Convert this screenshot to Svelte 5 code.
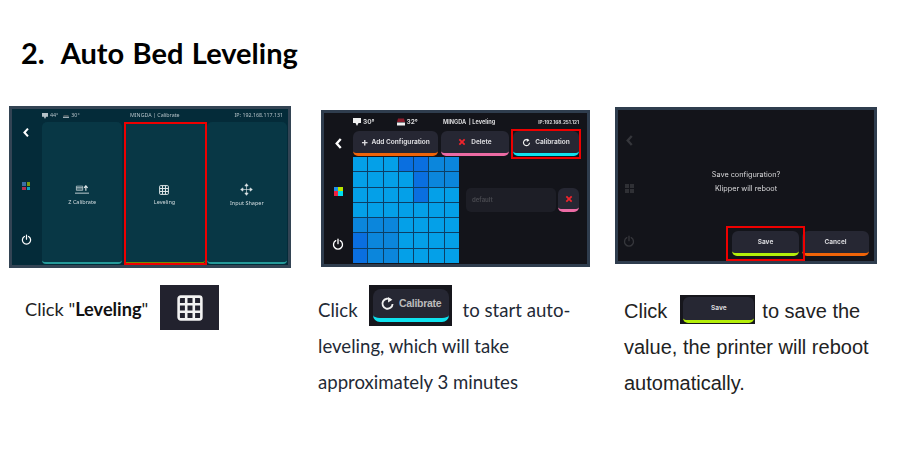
<script>
  const L = '#04a0e8', D = '#0a6fe0', M = '#0b86dc';
  const cells = [
    L,L,L,D,D,M,M,
    L,L,L,L,D,M,M,
    L,L,L,L,D,L,L,
    L,L,L,L,L,L,L,
    M,M,M,L,L,L,L,
    D,M,M,L,L,L,L,
    D,M,M,L,L,L,L
  ];
</script>

<svg width="0" height="0" class="defs" aria-hidden="true">
  <defs>
    <symbol id="back" viewBox="0 0 10 14"><path d="M7.500 2 3 7l4.500 5" fill="none" stroke="currentColor" stroke-width="2.600"/></symbol>
    <symbol id="power" viewBox="0 0 16 16"><path d="M5 3.600a6 6 0 1 0 6 0M8 1.500v6" fill="none" stroke="currentColor" stroke-width="1.800" stroke-linecap="round"/></symbol>
    <symbol id="grid" viewBox="0 0 24 24"><rect x="1.500" y="1.500" width="21" height="21" rx="2" fill="none" stroke="currentColor" stroke-width="2.400"/><path d="M8.500 2v20M15.500 2v20M2 8.500h20M2 15.500h20" stroke="currentColor" stroke-width="2.400"/></symbol>
    <symbol id="refresh" viewBox="0 0 16 16"><path d="M11.600 4.200a5.400 5.400 0 1 0 1.800 4.300" fill="none" stroke="currentColor" stroke-width="2"/><path d="M8.600 1v6l4.600-3z" fill="currentColor"/></symbol>
    <symbol id="cross" viewBox="0 0 12 12"><path d="M2 2l8 8M10 2l-8 8" stroke="currentColor" stroke-width="2.600"/></symbol>
    <symbol id="move" viewBox="0 0 20 20"><path d="M10 2v16M2 10h16M10 1 7.500 4.500h5zM10 19l-2.500-3.500h5zM1 10l3.500-2.500v5zM19 10l-3.500-2.500v5z" fill="currentColor" stroke="currentColor" stroke-width="1"/></symbol>
    <symbol id="z" viewBox="0 0 20 14"><path d="M2 1.500h9v6H2zM2 3.500h9M2 5.500h9" fill="none" stroke="currentColor" stroke-width=".9"/><path d="M15.500 8V2M13 4l2.500-3L18 4" fill="none" stroke="currentColor" stroke-width="1.600"/><path d="M0 11.500h20" stroke="currentColor" stroke-width="1.200"/></symbol>
    <symbol id="nozzle" viewBox="0 0 8 8"><path d="M0 0h8v5H5.500L4 8 2.500 5H0z" fill="currentColor"/></symbol>
    <symbol id="bed" viewBox="0 0 8 7"><path d="M1 0h6l1 3.500H0z" fill="#8c1c2c"/><path d="M0 4h8v3H0z" fill="currentColor"/></symbol>
    <symbol id="bedteal" viewBox="0 0 8 7"><path d="M1 2h6l1 2H0z" fill="#4a5a60"/><path d="M0 4.500h8V6H0z" fill="currentColor"/></symbol>
  </defs>
</svg>

<main class="page">
  <h1>2.&nbsp; Auto Bed Leveling</h1>
  <div class="steps">
    <section class="step one">
      <div class="screen teal">
        <aside class="side">
          <svg class="ico-back"><use href="#back" /></svg>
          <span class="dots tealdots"><i></i><i></i><i></i><i></i></span>
          <svg class="ico-power"><use href="#power" /></svg>
        </aside>
        <div class="body">
          <header class="status">
            <span class="temps"><svg><use href="#nozzle" /></svg>44°<svg class="gap"><use href="#bedteal" /></svg>30°</span>
            <span>MINGDA | Calibrate</span>
            <span class="ip1">IP: 192.168.117.131</span>
          </header>
          <div class="cards">
            <div class="card">
              <svg class="ci"><use href="#z" /></svg><span>Z Calibrate</span>
            </div>
            <div class="card active">
              <svg class="ci"><use href="#grid" /></svg><span>Leveling</span>
            </div>
            <div class="card">
              <svg class="ci big"><use href="#move" /></svg><span>Input Shaper</span>
            </div>
          </div>
        </div>
        <div class="mark m-level"></div>
      </div>
      <p class="cap calibri first">
        <span class="firsttext">Click "<b>Leveling</b>"</span>
        <span class="chip gridchip"><svg><use href="#grid" /></svg></span>
      </p>
    </section>

    <section class="step two">
      <div class="screen dark">
        <aside class="side">
          <svg class="ico-back"><use href="#back" /></svg>
          <span class="dots brightdots"><i></i><i></i><i></i><i></i></span>
          <svg class="ico-power"><use href="#power" /></svg>
        </aside>
        <div class="body">
          <header class="status st2">
            <span class="temps2"><b><svg><use href="#nozzle" /></svg>30°</b><b><svg><use href="#bed" /></svg>32°</b></span>
            <span class="title2">MINGDA &nbsp;| Leveling</span>
            <span class="ip2">IP:192.168.251.121</span>
          </header>
          <div class="actions">
            <span class="btn orange add"><em class="plus">+</em>Add Configuration</span>
            <span class="btn pink del"><svg class="x"><use href="#cross" /></svg>Delete</span>
            <span class="btn cyan cal"><svg class="r"><use href="#refresh" /></svg>Calibration</span>
          </div>
          <div class="mesh-row">
            <div class="mesh">
              {#each cells as c}<i style="background:{c}"></i>{/each}
            </div>
            <div class="profile">
              <span class="field">default</span>
              <span class="btn pink xbtn"><svg class="x"><use href="#cross" /></svg></span>
            </div>
          </div>
        </div>
        <div class="mark m-cal"></div>
      </div>
      <div class="cap calibri lines">
        <p>Click <span class="chip calchip"><span class="btn cyan"><svg class="r"><use href="#refresh" /></svg>Calibrate</span></span> to start auto-</p>
        <p>leveling, which will take</p>
        <p>approximately 3 minutes</p>
      </div>
    </section>

    <section class="step three">
      <div class="screen dark">
        <aside class="side faded">
          <svg class="ico-back"><use href="#back" /></svg>
          <span class="dots greydots"><i></i><i></i><i></i><i></i></span>
          <svg class="ico-power"><use href="#power" /></svg>
        </aside>
        <div class="body dialog">
          <div class="msg"><p>Save configuration?</p><p>Klipper will reboot</p></div>
          <div class="choices">
            <span class="btn lime">Save</span>
            <span class="btn orange">Cancel</span>
          </div>
        </div>
        <div class="mark m-save"></div>
      </div>
      <div class="cap arial lines">
        <p>Click <span class="chip savechip"><span class="btn lime">Save</span></span> to save the</p>
        <p>value, the printer will reboot</p>
        <p>automatically.</p>
      </div>
    </section>
  </div>
</main>

<style>
  :global(body) { margin: 0; background: #fff; }
  .defs { position: absolute; }
  .page { width: 900px; height: 450px; box-sizing: border-box; padding: 35px 0 0 0; overflow: hidden; color: #000; }
  h1 { margin: 0 0 0 21px; font: 700 29px/36px Lato, sans-serif; word-spacing: 1.400px; }
  .steps { display: flex; }
  .step { display: flex; flex-direction: column; }
  .one { margin: 35px 0 0 9px; width: 282px; }
  .two { margin: 39px 0 0 30px; width: 269px; }
  .three { margin: 36px 0 0 25px; width: 262px; }

  .screen { position: relative; box-sizing: border-box; display: flex; border: 3px solid #2f3d4e; color: #fff; }
  .one .screen { height: 162px; }
  .two .screen { height: 157px; }
  .three .screen { height: 157px; }
  .teal { background: #042b39; border-color: #334454; }
  .dark { background: #13141a; }
  .side, .body { filter: blur(.3px); }

  .side { flex: none; width: 30px; display: flex; flex-direction: column; align-items: center; justify-content: space-between; padding: 18px 2px 20px 0; box-sizing: border-box; }
  .side svg { display: block; }
  .ico-back { width: 8px; height: 11px; }
  .ico-power { width: 11px; height: 11px; }
  .dark .ico-back { width: 9px; height: 13px; }
  .dark .ico-power { width: 12px; height: 12px; }
  .dark .side { width: 29px; padding: 24px 1px 14px 0; }
  .dark .dots { margin-bottom: 6px; }
  .dots { display: grid; grid-template-columns: 3.500px 3.500px; gap: 1px; }
  .dots i { height: 3.500px; display: block; }
  .tealdots i:nth-child(1) { background: #3a6ea5; }
  .tealdots i:nth-child(2) { background: #7a9a10; }
  .tealdots i:nth-child(3) { background: #b03050; }
  .tealdots i:nth-child(4) { background: #0aa0c0; }
  .brightdots { grid-template-columns: 4.500px 4.500px; gap: 0; }
  .brightdots i { height: 4.500px; }
  .brightdots i:nth-child(1) { background: #1e90e8; }
  .brightdots i:nth-child(2) { background: #b8e800; }
  .brightdots i:nth-child(3) { background: #f02040; }
  .brightdots i:nth-child(4) { background: #00e0f0; }
  .greydots { grid-template-columns: 4px 4px; gap: 1px; }
  .greydots i { height: 4px; background: #2f3035; }
  .dark .faded { color: #35363b; padding-right: 7px; }

  .body { flex: 1; min-width: 0; display: flex; flex-direction: column; }
  .status { display: flex; font: 400 5.300px/13px "Noto Sans", sans-serif; color: #b5c2c8; height: 13px; padding: 0 5px 0 0; }
  .temps { width: 88px; display: flex; align-items: center; gap: 2px; }
  .temps svg { width: 6px; height: 6px; }
  .temps .gap { margin-left: 3px; }
  .ip1 { margin-left: auto; }
  .cards { flex: 1; display: flex; gap: 2px; padding: 0 1px 1px 0; }
  .card { flex: 1; display: flex; flex-direction: column; align-items: center; justify-content: center; gap: 3px; background: #083745; border-radius: 5px 5px 4px 4px; border-bottom: 2px solid #259a9a; font: 400 5.500px/8px "Noto Sans", sans-serif; color: #d3dde0; padding-top: 7px; box-sizing: border-box; }
  .card.active { border-bottom-color: #748c00; }
  .ci { width: 14px; height: 10px; color: #e0e8ea; }
  .big { height: 13px; width: 13px; margin-top: -2px; }

  .st2 { color: #d8d8da; font: 700 5.500px/14px Inter, sans-serif; height: 18px; padding: 0 8px 0 0; align-items: center; }
  .temps2 { width: 90px; display: flex; gap: 22px; font-size: 6.500px; }
  .temps2 b { font-weight: 700; display: flex; align-items: center; gap: 2px; }
  .temps2 svg { width: 8px; height: 8px; color: #f0f0f0; }
  .title2 { flex: 1; font-size: 5.600px; }
  .ip2 { font-size: 4.700px; }
  .actions { display: flex; padding: 0 8px 0 0; height: 25px; }
  .btn { box-sizing: border-box; display: inline-flex; align-items: center; justify-content: center; background: #262733; border-radius: 6px 6px 5px 5px; border-bottom: 3px solid; color: #d8d8dc; font: 700 6.500px/1 Inter, sans-serif; }
  .orange { border-color: #f06408; }
  .pink { border-color: #ec6ba4; }
  .cyan { border-color: #0ee2ee; }
  .lime { border-color: #b4ee0a; }
  .add { width: 85px; margin-right: 3px; }
  .del { width: 68px; margin-right: 4px; }
  .cal { width: 66px; }
  .plus { font: 700 11px/1 Inter, sans-serif; font-style: normal; margin-right: 3px; }
  .x { width: 8px; height: 8px; color: #f0242c; margin-right: 5px; }
  .r { width: 9px; height: 9px; margin-right: 4px; color: #f0f0f0; }
  .mesh-row { display: flex; padding: 1px 0 0 0; }
  .mesh { display: grid; grid-template-columns: repeat(7, 1fr); grid-template-rows: repeat(7, 1fr); gap: 1px; width: 106px; height: 106px; background: #0c3f66; flex: none; }
  .mesh i { display: block; }
  .profile { display: flex; gap: 2px; margin: 31px 0 0 7px; height: 24px; }
  .field { box-sizing: border-box; width: 90px; background: #1d1e26; border-radius: 5px; font: 700 6px/24px Inter, sans-serif; color: #45464c; padding-left: 6px; }
  .xbtn { width: 21px; height: 24px; }
  .xbtn .x { margin: 0; }

  .dialog { position: relative; display: flex; flex-direction: column; justify-content: space-between; }
  .msg { text-align: center; padding: 58px 29px 0 0; font: 400 7.300px/13.500px Inter, sans-serif; color: #d8d8da; }
  .msg p { margin: 0; }
  .choices { display: flex; gap: 3px; justify-content: flex-end; padding: 0 5px 5px 0; height: 25px; }
  .choices .btn { width: 67px; font-size: 6.500px; }

  .mark { position: absolute; border: 2px solid #ee0000; box-sizing: border-box; pointer-events: none; }
  .m-level { left: 112px; top: 13px; width: 83px; height: 143px; }
  .m-cal { left: 187px; top: 16px; width: 70px; height: 30px; }
  .m-save { left: 108px; top: 116px; width: 79px; height: 35px; }

  .cap { color: #222; }
  .cap p { margin: 0; }
  .calibri { font: 400 18.600px/36px Lato, sans-serif; }
  .first { display: flex; align-items: center; margin: 17px 0 0 16px; height: 45px; font-size: 18.200px; }
  .firsttext { margin-top: 3px; }
  .first b { font-weight: 700; color: #111; }
  .lines p { height: 36px; white-space: nowrap; display: flex; align-items: center; }
  .two .lines { margin: 25px 0 0 -3px; }
  .two .lines p { color: #1f2a36; }
  .three .lines { margin: 29px 0 0 9px; font: 400 20px/36px "Liberation Sans", sans-serif; }
  .chip { display: inline-flex; box-sizing: border-box; background: #16161c; }
  .gridchip { width: 59px; height: 45px; background: #22222e; align-items: center; justify-content: center; margin-left: 12px; color: #f2f2f2; }
  .gridchip svg { width: 26px; height: 26px; }
  .calchip { width: 83px; height: 41px; margin: 0 11px 9px 11px; padding: 4px 3px 4px 4px; }
  .calchip .btn { width: 100%; font: 700 10.500px/1 "Liberation Sans", sans-serif; letter-spacing: -.3px; border-bottom-width: 4px; border-radius: 8px 8px 7px 7px; color: #bbb; }
  .calchip .r { width: 15px; height: 15px; }
  .savechip { width: 75px; height: 29px; margin: 0 7px 4px 13px; padding: 2px 1px 1px 3px; }
  .savechip .btn { width: 100%; font: 700 6.500px/1 Inter, sans-serif; }
</style>
